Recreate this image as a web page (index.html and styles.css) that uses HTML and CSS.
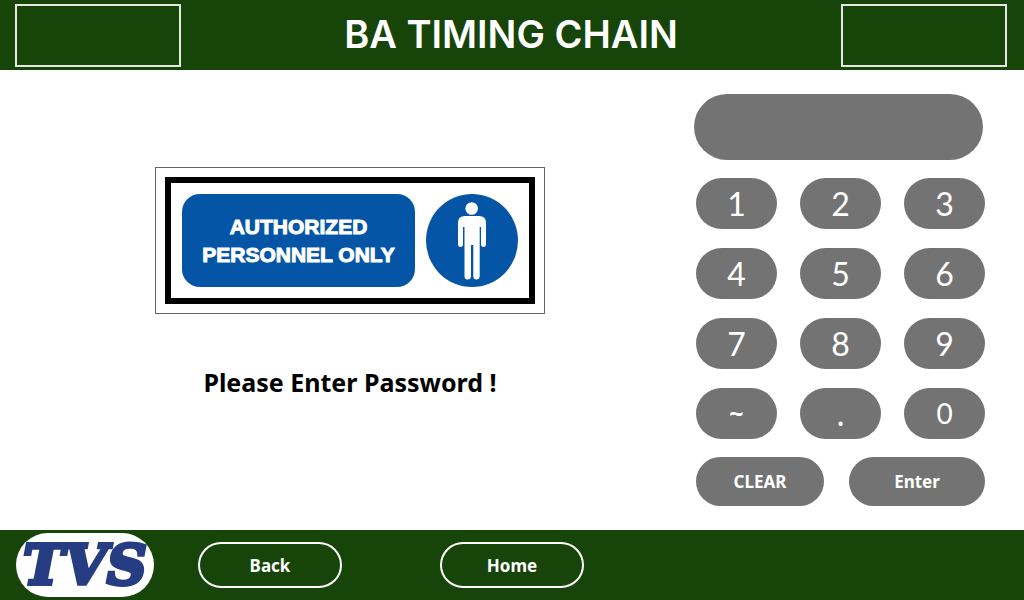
FILE: index.html
```html
<!DOCTYPE html>
<html lang="en">
<head>
<meta charset="utf-8">
<meta name="viewport" content="width=device-width, initial-scale=1">
<title>BA Timing Chain</title>
<link rel="stylesheet" href="styles.css">
</head>
<body>
<header class="topbar">
  <div class="slot"></div>
  <h1 class="title">BA TIMING CHAIN</h1>
  <div class="slot"></div>
</header>
<main class="main">
  <section class="notice">
    <div class="sign">
      <div class="sign-frame">
        <p class="sign-text">AUTHORIZED<br>PERSONNEL ONLY</p>
        <svg class="sign-person" viewBox="0 0 92 93" aria-hidden="true">
          <ellipse cx="46" cy="46.500" rx="46" ry="46.500" fill="#0455a5"/>
          <g fill="#fff">
            <circle cx="45.700" cy="14.500" r="6.300"/>
            <path d="M39 22H53Q60 22 60 29V50Q60 53 57.500 53Q55 53 55 50V33H53.700V82Q53.700 85.500 50.500 85.500Q47.300 85.500 47.300 82V51H45V82Q45 85.500 41.500 85.500Q38.500 85.500 38.500 82V33H37V50Q37 53 34.500 53Q32 53 32 50V29Q32 22 39 22Z"/>
          </g>
        </svg>
      </div>
    </div>
    <label class="prompt" for="password">Please Enter Password !</label>
  </section>
  <form class="keypad" onsubmit="return false">
    <input class="display" id="password" type="password" autocomplete="off">
    <div class="keys">
      <button class="key" type="button">1</button>
      <button class="key" type="button">2</button>
      <button class="key" type="button">3</button>
      <button class="key" type="button">4</button>
      <button class="key" type="button">5</button>
      <button class="key" type="button">6</button>
      <button class="key" type="button">7</button>
      <button class="key" type="button">8</button>
      <button class="key" type="button">9</button>
      <button class="key key-tilde" type="button">~</button>
      <button class="key key-dot" type="button">.</button>
      <button class="key key-zero" type="button">0</button>
    </div>
    <div class="actions">
      <button class="action" type="button">CLEAR</button>
      <button class="action" type="submit">Enter</button>
    </div>
  </form>
</main>
<footer class="bottombar">
  <div class="logo">TVS</div>
  <nav class="nav">
    <button class="nav-button" type="button">Back</button>
    <button class="nav-button" type="button">Home</button>
  </nav>
</footer>
</body>
</html>
```
FILE: styles.css
```css
* {
  box-sizing: border-box;
}

body {
  margin: 0;
  min-height: 100vh;
  display: flex;
  flex-direction: column;
  background: #fff;
  color: #000;
  font-family: "Noto Sans", "Open Sans", sans-serif;
}

button,
input {
  margin: 0;
  padding: 0;
  border: 0;
  font: inherit;
  color: #fff;
}

button {
  cursor: pointer;
}

.topbar {
  display: flex;
  align-items: center;
  justify-content: space-between;
  padding: 4px 17px 3px 15px;
  background: #174408;
  color: #fff;
}

.slot {
  width: 166px;
  height: 63px;
  border: 2px solid #e4eae2;
}

.title {
  margin: 0;
  padding-bottom: 3px;
  font-family: Inter, "Noto Sans", sans-serif;
  font-size: 38px;
  line-height: 56px;
  font-weight: 600;
}

.main {
  flex: 1;
  display: flex;
  align-items: flex-start;
  padding: 24px 39px 20px 6px;
}

.notice {
  flex: 1;
  display: flex;
  flex-direction: column;
  align-items: center;
  gap: 50px;
  padding-top: 73px;
}

.sign {
  padding: 9px;
  border: 1px solid #666;
}

.sign-frame {
  display: flex;
  align-items: center;
  gap: 11px;
  padding: 11px;
  border: 6px solid #000;
}

.sign-text {
  margin: 0;
  padding: 19px 20px 18px;
  border-radius: 18px;
  background: #0455a5;
  color: #fff;
  font-family: "Liberation Sans", Arial, sans-serif;
  font-size: 21px;
  line-height: 28px;
  font-weight: 700;
  text-align: center;
  -webkit-text-stroke: 1px #fff;
}

.sign-person {
  width: 92px;
  height: 93px;
}

.prompt {
  font-size: 25px;
  line-height: 36px;
  font-weight: 700;
}

.keypad {
  width: 291px;
  display: flex;
  flex-direction: column;
  gap: 18px;
}

.display {
  width: 289px;
  height: 66px;
  padding: 0 28px;
  border-radius: 33px;
  background: #737373;
  font-size: 32px;
}

.keys {
  display: grid;
  grid-template-columns: repeat(3, 1fr);
  gap: 19px 23px;
  padding-left: 2px;
}

.key {
  height: 51px;
  border-radius: 26px;
  background: #737373;
  font-family: Lato, sans-serif;
  font-size: 32px;
  line-height: 51px;
}

.key-tilde {
  font-family: "Noto Sans", sans-serif;
  font-size: 25px;
  font-weight: 700;
}

.key-dot {
  font-family: "Noto Sans", sans-serif;
}

.key-zero {
  font-size: 28px;
}

.actions {
  display: grid;
  grid-template-columns: 128fr 136fr;
  gap: 25px;
  padding-left: 2px;
}

.action {
  height: 49px;
  border-radius: 25px;
  background: #737373;
  font-size: 17px;
  font-weight: 700;
}

.bottombar {
  display: flex;
  align-items: center;
  gap: 44px;
  height: 70px;
  padding: 0 16px;
  background: #174408;
}

.logo {
  width: 138px;
  border-radius: 32px;
  background: #fff;
  color: #263c83;
  font-family: "DejaVu Serif", serif;
  font-size: 55px;
  line-height: 64px;
  font-weight: 700;
  font-style: italic;
  text-align: center;
  -webkit-text-stroke: 4px #263c83;
}

.nav {
  display: flex;
  gap: 98px;
}

.nav-button {
  width: 144px;
  height: 46px;
  border: 2px solid #fff;
  border-radius: 23px;
  background: transparent;
  font-size: 17px;
  font-weight: 700;
}
```
